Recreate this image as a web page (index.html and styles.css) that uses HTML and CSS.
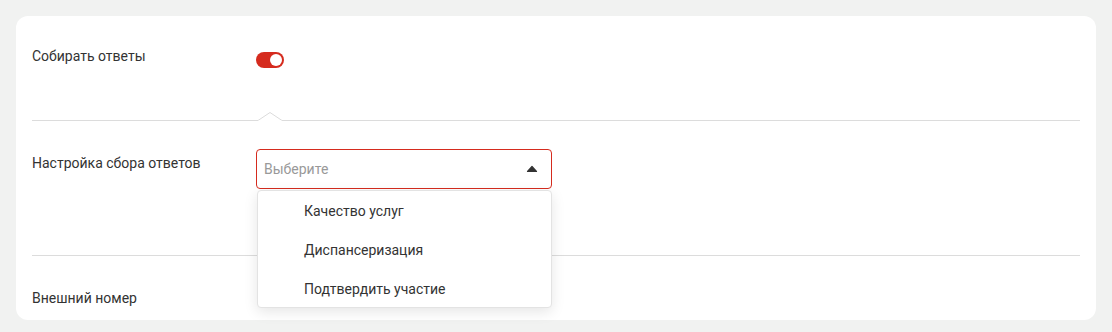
FILE: index.html
```html
<!DOCTYPE html>
<html lang="ru">
<head>
<meta charset="utf-8">
<link rel="stylesheet" href="styles.css">
</head>
<body>
<div class="card">
  <section class="section section-first">
    <div class="row">
      <div class="label">Собирать ответы</div>
      <div class="control">
        <span class="toggle"><span class="knob"></span></span>
      </div>
    </div>
    <svg class="notch" width="24" height="9" viewBox="0 0 24 9">
      <polygon points="0,8.5 12,0.5 24,8.5" fill="#fff" stroke="#dcdcdc" stroke-width="1"/>
      <rect x="0.5" y="8" width="23" height="1" fill="#fff"/>
    </svg>
  </section>
  <section class="section section-second">
    <div class="row">
      <div class="label label-offset">Настройка сбора ответов</div>
      <div class="control select-wrap">
        <div class="select">
          <span class="placeholder">Выберите</span>
          <svg class="caret" width="12" height="8" viewBox="0 0 12 8">
            <path d="M6 1.5 L10.5 6.5 H1.5 Z" fill="#333" stroke="#333" stroke-width="1.2" stroke-linejoin="round"/>
          </svg>
        </div>
        <ul class="menu">
          <li class="menu-item">Качество услуг</li>
          <li class="menu-item">Диспансеризация</li>
          <li class="menu-item">Подтвердить участие</li>
        </ul>
      </div>
    </div>
  </section>
  <section class="section section-third">
    <div class="row">
      <div class="label">Внешний номер</div>
    </div>
  </section>
</div>
</body>
</html>
```

FILE: styles.css
```css
* { box-sizing: border-box; }
html, body {
  margin: 0;
  padding: 0;
  background: #f1f2f1;
}
body {
  padding: 16px;
  font-family: Roboto, "Noto Sans", sans-serif;
  font-size: 14px;
  line-height: 20px;
  color: #333;
  height: 332px;
  overflow: hidden;
}
.card {
  background: #fff;
  border-radius: 12px;
  padding: 0 16px;
  height: 304px;
}
.section {
  position: relative;
  border-bottom: 1px solid #dcdcdc;
}
.section-first {
  padding: 30px 0 52px 0;
}
.section-second {
  padding: 28px 0 66px 0;
}
.section-third {
  padding: 32px 0 12px 0;
  border-bottom: none;
}
.row {
  display: flex;
  align-items: flex-start;
}
.label {
  width: 224px;
  flex: none;
  color: #333;
}
.label-offset {
  padding-top: 4px;
}
.control {
  flex: none;
}
.toggle {
  margin-top: 6px;
  width: 28px;
  height: 16px;
  border-radius: 8px;
  background: #d52b1e;
  display: flex;
  justify-content: flex-end;
  align-items: center;
  padding: 2px;
}
.knob {
  width: 12px;
  height: 12px;
  border-radius: 50%;
  background: #fff;
}
.notch {
  position: absolute;
  left: 226px;
  bottom: -1px;
  display: block;
}
.select-wrap {
  position: relative;
  z-index: 2;
}
.select {
  width: 296px;
  height: 40px;
  border: 1px solid #d52b1e;
  border-radius: 4px;
  display: flex;
  align-items: center;
  justify-content: space-between;
  padding: 0 13px 0 7px;
  background: #fff;
}
.placeholder {
  color: #999;
}
.caret {
  display: block;
}
.menu {
  position: absolute;
  top: 41px;
  left: 1px;
  width: 295px;
  margin: 0;
  padding: 0;
  list-style: none;
  background: #fff;
  border: 1px solid #e3e3e3;
  border-radius: 4px;
  box-shadow: 0 4px 14px rgba(0, 0, 0, 0.1);
  height: 118px;
}
.menu-item {
  height: 39px;
  display: flex;
  align-items: center;
  padding-left: 46px;
  color: #333;
}
```
